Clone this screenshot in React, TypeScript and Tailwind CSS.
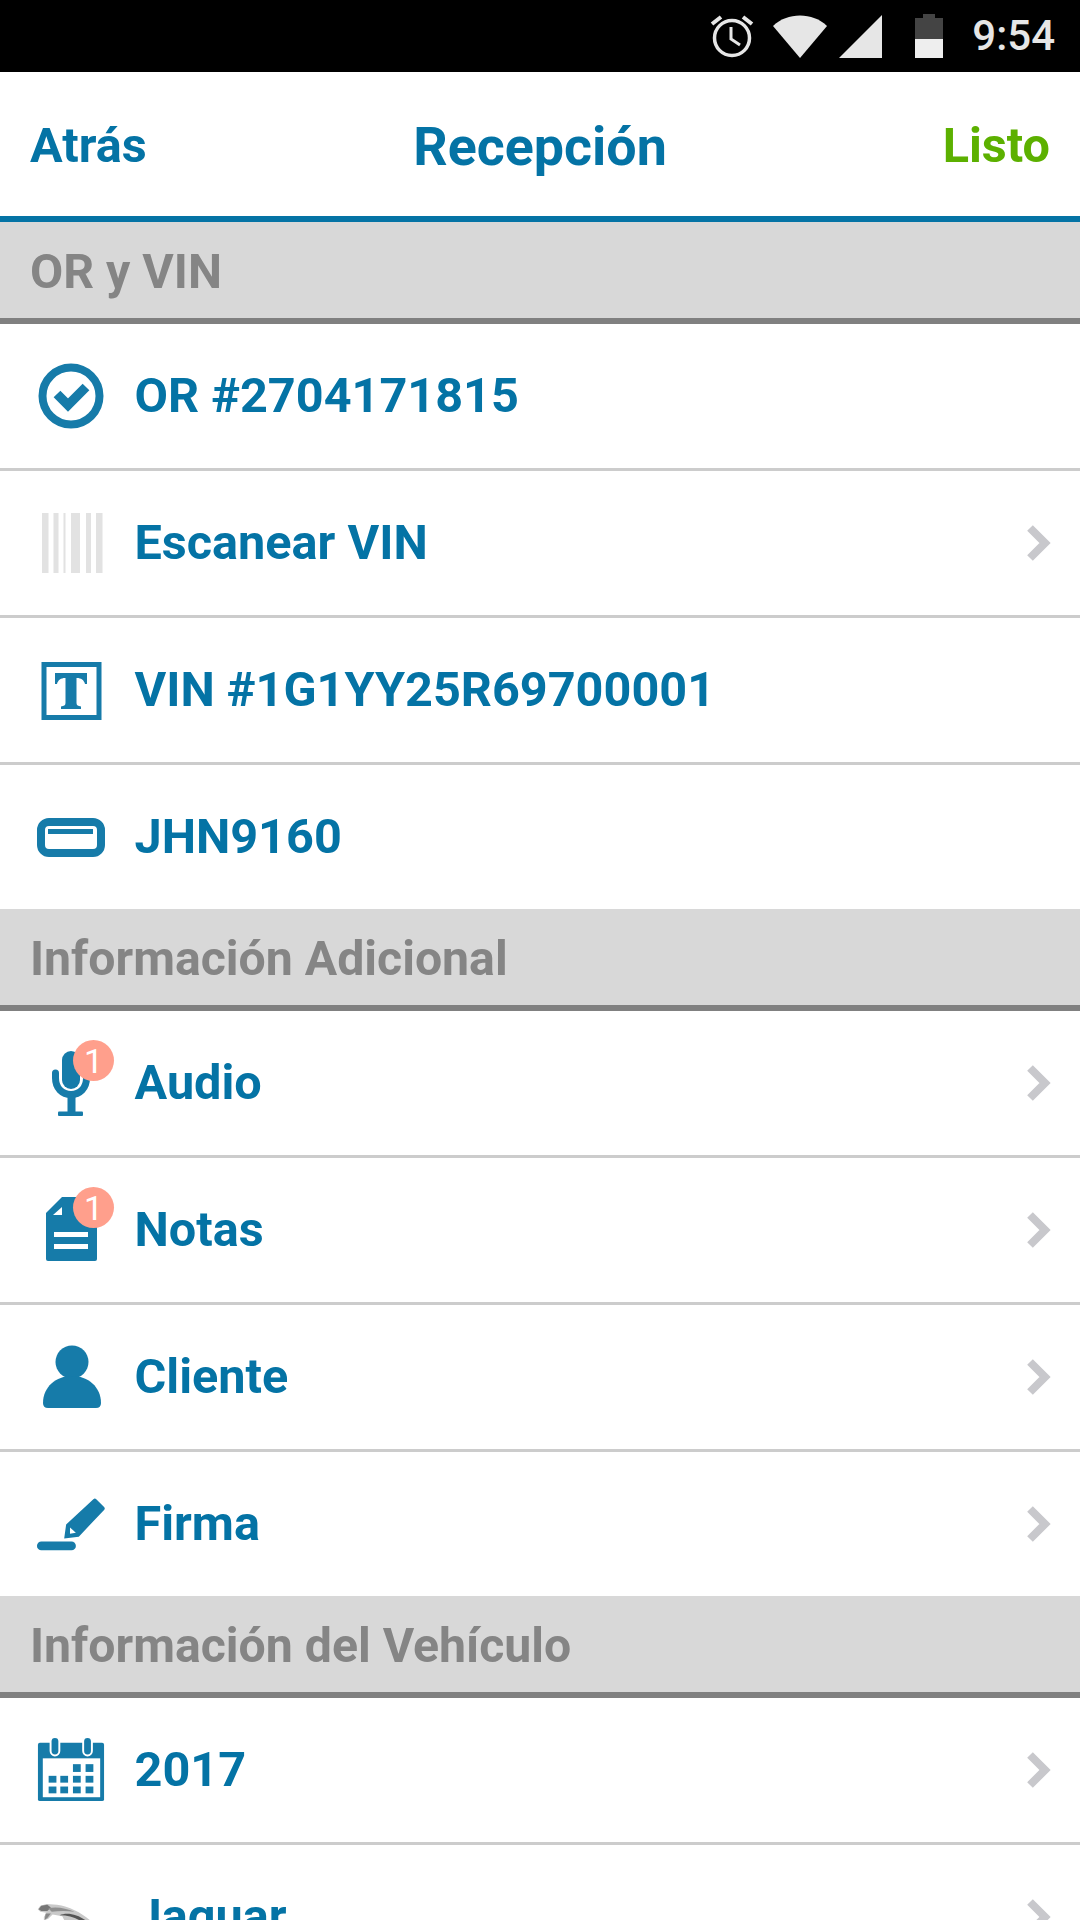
import React from "react";

const blue = "#167ba9";

const Chevron = () => (
  <svg width="28" height="38" viewBox="0 0 28 38" className="shrink-0">
    <path d="M4 4 L19 19 L4 34" fill="none" stroke="#c8c8cc" strokeWidth="8" />
  </svg>
);

const Badge = () => (
  <div className="absolute left-[37px] top-[-10px] w-[41px] h-[41px] rounded-full bg-[#ff9f8c] flex items-center justify-center text-white text-[34px] font-normal leading-none">
    1
  </div>
);

const CheckIcon = () => (
  <svg width="66" height="66" viewBox="0 0 66 66">
    <circle cx="33" cy="33" r="28.5" fill="none" stroke={blue} strokeWidth="8" />
    <path d="M19 31 L30 42 L48 24" fill="none" stroke={blue} strokeWidth="9.5" />
  </svg>
);

const BarcodeIcon = () => (
  <svg width="66" height="60" viewBox="0 0 66 60">
    <g fill="#e2e2e2">
      <rect x="4" y="0" width="6.5" height="60" />
      <rect x="15.5" y="0" width="5" height="60" />
      <rect x="25.5" y="0" width="2" height="60" />
      <rect x="33" y="0" width="9" height="60" />
      <rect x="48" y="0" width="5" height="60" />
      <rect x="58" y="0" width="6.5" height="60" />
    </g>
  </svg>
);

const TextIcon = () => (
  <svg width="66" height="62" viewBox="0 0 66 62">
    <rect x="6" y="5.5" width="55" height="53" fill="none" stroke={blue} strokeWidth="5" />
    <path
      d="M17 14 H49 V25 H47 C46 21 43 19 39 19 H38.5 V44 C38.5 46.5 40 47 43 47.5 V50 H23 V47.5 C26 47 27.5 46.5 27.5 44 V19 H27 C23 19 20 21 19 25 H17 Z"
      fill={blue}
    />
  </svg>
);

const PlateIcon = () => (
  <svg width="70" height="42" viewBox="0 0 70 42">
    <rect x="5" y="6" width="60" height="31" rx="8" fill="none" stroke={blue} strokeWidth="8" />
    <rect x="12" y="13" width="45" height="5" fill={blue} />
  </svg>
);

const MicIcon = () => (
  <svg width="50" height="66" viewBox="0 0 50 66">
    <rect x="16" y="1" width="18" height="38" rx="9" fill={blue} />
    <path d="M9.5 23 V28 C9.5 38 16 44.5 25 44.5 C34 44.5 40.5 38 40.5 28 V23" fill="none" stroke={blue} strokeWidth="7" strokeLinecap="round" />
    <rect x="21.5" y="46" width="8" height="17" fill={blue} />
    <rect x="12" y="61.5" width="25" height="4.5" rx="1" fill={blue} />
  </svg>
);

const NoteIcon = () => (
  <svg width="56" height="66" viewBox="0 0 56 66">
    <path d="M19 0 H52 Q54 0 54 2 V62 Q54 64 52 64 H5 Q3 64 3 62 V16 Z" fill={blue} />
    <path d="M19 10 V18 H10 Z" fill="#fff" />
    <rect x="11" y="35" width="34" height="5" fill="#fff" />
    <rect x="11" y="47" width="34" height="5" fill="#fff" />
  </svg>
);

const PersonIcon = () => (
  <svg width="62" height="64" viewBox="0 0 62 64">
    <circle cx="32" cy="17" r="16.5" fill={blue} />
    <path d="M3 58 C3 42 16 31 32 31 C48 31 61 42 61 58 Q61 63 56 63 H8 Q3 63 3 58 Z" fill={blue} />
  </svg>
);

const PenIcon = () => (
  <svg width="72" height="56" viewBox="0 0 72 56">
    <path d="M31 28.5 L59 2.5 Q60.5 1 62 2.5 L70 10.5 Q71.5 12 70 13.5 L44 41 L29 43 Z" fill={blue} />
    <path d="M35 31.5 L41 37 L35 38 Z" fill="#fff" />
    <rect x="1" y="46" width="40" height="9" rx="4.5" fill={blue} />
  </svg>
);

const CalendarIcon = () => (
  <svg width="72" height="66" viewBox="0 0 72 66">
    <path d="M4 5 H68 Q70 5 70 7 V63 Q70 65 68 65 H4 Q2 65 2 63 V7 Q2 5 4 5 Z" fill={blue} />
    <rect x="7" y="21" width="59" height="40" fill="#fff" />
    <rect x="15" y="-1" width="9" height="19" rx="4.5" fill={blue} stroke="#fff" strokeWidth="2" />
    <rect x="48.5" y="-1" width="9" height="19" rx="4.5" fill={blue} stroke="#fff" strokeWidth="2" />
    <g fill={blue}>
      <rect x="38" y="27" width="8" height="8" />
      <rect x="51" y="27" width="8" height="8" />
      <rect x="13" y="39" width="8" height="7" />
      <rect x="25" y="39" width="8" height="7" />
      <rect x="38" y="39" width="8" height="7" />
      <rect x="51" y="39" width="8" height="7" />
      <rect x="13" y="50" width="8" height="7" />
      <rect x="25" y="50" width="8" height="7" />
      <rect x="38" y="50" width="8" height="7" />
      <rect x="51" y="50" width="8" height="7" />
    </g>
  </svg>
);

// leaping cat from the make logo, only its top edge shows above the fold
const JaguarIcon = () => (
  <svg width="80" height="66" viewBox="0 0 80 66">
    <path d="M2 24 L5 20 L12 18 L24 19 C38 21 52 28 62 37 L62 40 H34 L30 32 L19 30 L14 35 L9 37 L9 33 L12 28 L5 27 Z" fill="#c9c9c9" />
    <path d="M3 24 L6 20 L13 19 L17 22 L13 26 L6 26 Z" fill="#777777" />
    <path d="M14 23 C24 21 34 23 44 27 C36 26 26 26 18 27 Z" fill="#8f8f8f" />
    <path d="M27 31 C35 27 48 30 57 37 L50 37 C44 33 36 31 27 31 Z" fill="#555555" />
    <path d="M11 29 L17 29 L13 34 L10 36 Z" fill="#888888" />
  </svg>
);

type RowProps = {
  icon: React.ReactNode;
  label: string;
  chevron?: boolean;
  badge?: boolean;
  last?: boolean;
};

const Row: React.FC<RowProps> = ({ icon, label, chevron, badge, last }) => (
  <div
    className={`flex items-center bg-white shrink-0 pl-[36px] pr-[26px] ${
      last ? "h-[144px]" : "h-[147px] border-b-[3px] border-[#cccccc]"
    }`}
  >
    <div className="relative w-[98.5px] h-[66px] shrink-0 flex items-center">
      <div className="w-[70px] flex justify-center">{icon}</div>
      {badge && <Badge />}
    </div>
    <p className="flex-1 text-[#0473a5] text-[48.6px] font-bold leading-none">{label}</p>
    {chevron && <Chevron />}
  </div>
);

const Section: React.FC<{ title: string }> = ({ title }) => (
  <div className="h-[102px] shrink-0 bg-[#d8d8d8] border-b-[6px] border-[#808080] flex items-center pl-[30px] pt-[4px]">
    <p className="text-[#858585] text-[48.2px] font-bold leading-none">{title}</p>
  </div>
);

const StatusBar = () => (
  <div className="h-[72px] shrink-0 bg-black flex items-center justify-end pr-[25px]">
    <svg width="44" height="44" viewBox="0 0 44 44" className="mr-[19px]">
      <circle cx="22" cy="24" r="17.5" fill="none" stroke="#e6e6e6" strokeWidth="3.5" />
      <path d="M21 13 V25 L30 31" fill="none" stroke="#e6e6e6" strokeWidth="3" />
      <path d="M2 10 L11 3 M42 10 L33 3" stroke="#e6e6e6" strokeWidth="4" />
    </svg>
    <svg width="54" height="43" viewBox="0 0 54 43" className="mr-[12px]">
      <path d="M0 11 C14 -3 40 -3 54 11 L27 43 Z" fill="#e6e6e6" />
    </svg>
    <svg width="43" height="43" viewBox="0 0 43 43" className="mr-[33px]">
      <path d="M43 0 V43 H0 Z" fill="#e6e6e6" />
    </svg>
    <svg width="28" height="44" viewBox="0 0 28 44" className="mr-[29px]">
      <path d="M8 0 H20 V4 H28 V25 H0 V4 H8 Z" fill="#444444" />
      <rect x="0" y="25" width="28" height="19" fill="#eeeeee" />
    </svg>
    <span className="text-[#e6e6e6] text-[42px] font-medium leading-none">9:54</span>
  </div>
);

const Header = () => (
  <div className="h-[150px] shrink-0 bg-white border-b-[6px] border-[#0473a5] flex items-center px-[30px] pt-[5px]">
    <span className="flex-1 text-[#0473a5] text-[48.6px] font-bold leading-none">Atrás</span>
    <span className="text-[#0473a5] text-[53.8px] font-bold leading-none">Recepción</span>
    <span className="flex-1 text-right text-[#5cb000] text-[48.6px] font-bold leading-none">Listo</span>
  </div>
);

export default function App() {
  return (
    <div
      className="w-[1080px] h-[1920px] overflow-hidden bg-white flex flex-col"
      style={{ fontFamily: "Roboto, sans-serif" }}
    >
      <StatusBar />
      <Header />
      <Section title="OR y VIN" />
      <Row icon={<CheckIcon />} label="OR #2704171815" />
      <Row icon={<BarcodeIcon />} label="Escanear VIN" chevron />
      <Row icon={<TextIcon />} label="VIN #1G1YY25R69700001" />
      <Row icon={<PlateIcon />} label="JHN9160" last />
      <Section title="Información Adicional" />
      <Row icon={<MicIcon />} label="Audio" chevron badge />
      <Row icon={<NoteIcon />} label="Notas" chevron badge />
      <Row icon={<PersonIcon />} label="Cliente" chevron />
      <Row icon={<PenIcon />} label="Firma" chevron last />
      <Section title="Información del Vehículo" />
      <Row icon={<CalendarIcon />} label="2017" chevron />
      <Row icon={<JaguarIcon />} label="Jaguar" chevron />
    </div>
  );
}
